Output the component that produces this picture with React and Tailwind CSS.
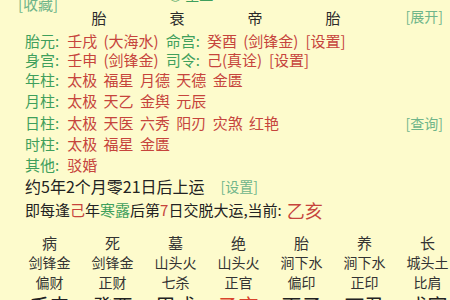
const FONT = { fontFamily: '"Noto Sans CJK SC", "Noto Sans", sans-serif' };

const INFO = [
  { label: '胎元', parts: [['壬戌 (大海水)', 'r'], ['命宫:', 'g'], ['癸酉 (剑锋金)', 'r'], ['[设置]', 'r']], h: 'h-[20px]' },
  { label: '身宫', parts: [['壬申 (剑锋金)', 'r'], ['司令:', 'g'], ['己(真诠)', 'r'], ['[设置]', 'r']], h: 'h-[19px]' },
  { label: '年柱', parts: [['太极 福星 月德 天德 金匮', 'r']], h: 'h-[20px]' },
  { label: '月柱', parts: [['太极 天乙 金舆 元辰', 'r']], h: 'h-[23px]' },
  { label: '日柱', parts: [['太极 天医 六秀 阳刃 灾煞 红艳', 'r']], h: 'h-[21px]', link: '[查询]' },
  { label: '时柱', parts: [['太极 福星 金匮', 'r']], h: 'h-[21px]' },
  { label: '其他', parts: [['驳婚', 'r']], h: 'h-[21px]' },
];

const STAGES = ['病', '死', '墓', '绝', '胎', '养', '长'];
const NAYIN = ['剑锋金', '剑锋金', '山头火', '山头火', '涧下水', '涧下水', '城头土'];
const GODS = ['偏财', '正财', '七杀', '正官', '偏印', '正印', '比肩'];
const PILLARS = ['壬申', '癸酉', '甲戌', '乙亥', '丙子', '丁丑', '戊寅'];

const colorOf = (c) => (c === 'g' ? 'text-[#3f9f5c]' : 'text-[#c6443c]');

export default function App() {
  return (
    <div className="w-[450px] h-[300px] overflow-hidden bg-[#fdfbcc] text-[#2a2a2a] flex flex-col" style={FONT}>
      <div className="h-[12px] -mt-[3px] flex items-center shrink-0">
        <span className="pl-[18px] text-[15px] text-[#6fb58a] leading-none">[收藏]</span>
        <span className="ml-[110px] self-start -mt-[10px] text-[14px] text-[#3f9f5c] leading-none">◎ 星盘</span>
      </div>

      <div className="h-[16px] flex items-center shrink-0">
        <div className="pl-[60px] flex text-[15px] leading-none">
          {['胎', '衰', '帝', '胎'].map((t, i) => (
            <span key={i} className="w-[78px] text-center">{t}</span>
          ))}
        </div>
        <span className="ml-auto pr-[7px] -mt-[3px] text-[14px] text-[#6fb58a] leading-none">[展开]</span>
      </div>

      <div className="mt-[5px] flex flex-col">
        {INFO.map((row) => (
          <div key={row.label} className={`${row.h} flex items-center pl-[25px] text-[15px] leading-none shrink-0`}>
            <span className="text-[#3f9f5c]">{row.label}:</span>
            <div className="ml-[8px] flex gap-[7px] [word-spacing:3px]">
              {row.parts.map(([t, c], i) => (
                <span key={i} className={colorOf(c)}>{t}</span>
              ))}
            </div>
            {row.link ? (
              <span className="ml-auto pr-[7px] text-[14px] text-[#6fb58a]">{row.link}</span>
            ) : null}
          </div>
        ))}
      </div>

      <div className="h-[22px] flex items-center pl-[25px] leading-none shrink-0">
        <span className="text-[16px] text-[#222]">约5年2个月零21日后上运</span>
        <span className="ml-[16px] text-[14px] text-[#6fb58a]">[设置]</span>
      </div>

      <div className="h-[25px] flex items-center pl-[25px] text-[15px] leading-none shrink-0 text-[#222]">
        <span>即每逢</span>
        <span className="text-[#c6443c]">己</span>
        <span>年</span>
        <span className="text-[#3f9f5c]">寒露</span>
        <span>后第</span>
        <span className="text-[#c6443c]">7</span>
        <span>日交脱大运,当前:</span>
        <span className="ml-[5px] text-[18px] text-[#c6443c]">乙亥</span>
      </div>

      <div className="mt-[10px] pl-[18px] flex flex-col shrink-0">
        {[
          { items: STAGES, cls: 'h-[20px] text-[15px]' },
          { items: NAYIN, cls: 'h-[20px] text-[14px]' },
          { items: GODS, cls: 'h-[20px] text-[14px]' },
        ].map((r, ri) => (
          <div key={ri} className={`${r.cls} flex items-center leading-none text-[#333]`}>
            {r.items.map((t, i) => (
              <span key={i} className="w-[63px] shrink-0 text-center">{t}</span>
            ))}
          </div>
        ))}
        <div className="mt-[1px] h-[26px] flex items-center leading-none text-[20px] text-[#222]">
          {PILLARS.map((t, i) => (
            <span key={i} className={`w-[63px] shrink-0 text-center ${i === 3 ? 'text-[#d9432c]' : ''}`}>{t}</span>
          ))}
        </div>
      </div>
    </div>
  );
}
